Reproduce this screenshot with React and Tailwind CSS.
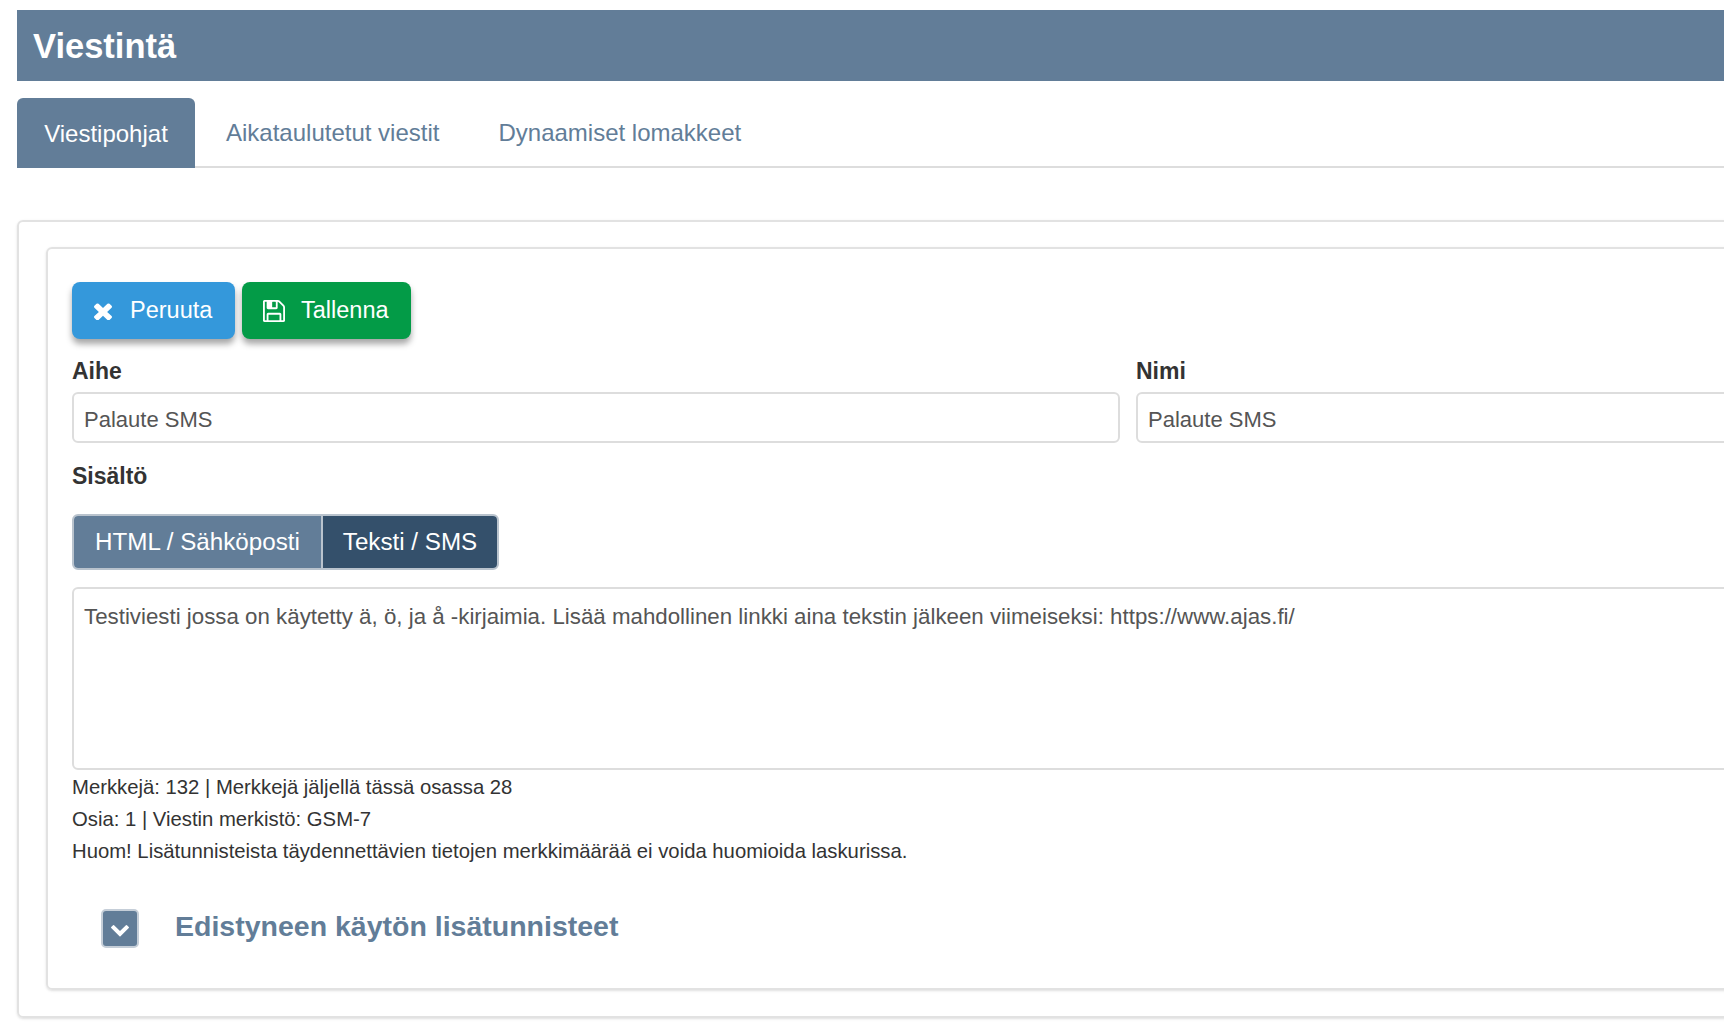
import React from "react";

const inputClasses =
  "block w-full h-[51px] border-2 border-[#dddddd] rounded-[6px] px-[10px] pt-[4px] text-[22px] text-[#555555] bg-white";

const TimesIcon = ({ className }) => (
  <svg className={className} viewBox="110 266 1188 1260" preserveAspectRatio="none" fill="currentColor">
    <path d="M1298 1322q0 40-28 68l-136 136q-28 28-68 28t-68-28l-294-294-294 294q-28 28-68 28t-68-28l-136-136q-28-28-28-68t28-68l294-294-294-294q-28-28-28-68t28-68l136-136q28-28 68-28t68 28l294 294 294-294q28-28 68-28t68 28l136 136q28 28 28 68t-28 68l-294 294 294 294q28 28 28 68z" />
  </svg>
);

const SaveIcon = ({ className }) => (
  <svg className={className} viewBox="128 128 1536 1536" fill="currentColor">
    <path d="M512 1536h768v-384h-768v384zm896 0h128v-896q0-14-10-38.500t-20-34.500l-281-281q-10-10-34-20t-39-10v416q0 40-28 68t-68 28h-576q-40 0-68-28t-28-68v-416h-128v1280h128v-416q0-40 28-68t68-28h832q40 0 68 28t28 68v416zm-384-928v-320q0-13-9.500-22.500t-22.500-9.500h-192q-13 0-22.500 9.500t-9.500 22.500v320q0 13 9.500 22.500t22.500 9.500h192q13 0 22.500-9.500t9.500-22.500zm640 32v928q0 40-28 68t-68 28h-1344q-40 0-68-28t-28-68v-1344q0-40 28-68t68-28h928q40 0 88 20t76 48l280 280q28 28 48 76t20 88z" />
  </svg>
);

const ChevronIcon = ({ className }) => (
  <svg className={className} viewBox="0 0 1792 1792" fill="currentColor">
    <path d="M1683 808l-742 741q-19 19-45 19t-45-19l-742-741q-19-19-19-45.500t19-45.500l166-165q19-19 45-19t45 19l531 531 531-531q19-19 45-19t45 19l166 165q19 19 19 45.500t-19 45.500z" />
  </svg>
);

const App = () => {
  return (
    <div className="w-[1724px] h-[1036px] overflow-hidden bg-white font-['Liberation_Sans',Arial,sans-serif] text-[#333333]">
      <div className="w-[2400px] pl-[17px] pt-[10px]">
        <div className="h-[71px] bg-[#627d98] flex items-center pl-[16px] pt-[3px]">
          <h1 className="text-[34.5px] font-bold text-white">Viestintä</h1>
        </div>

        <div className="mt-[17px] h-[70px] flex border-b-2 border-[#dddddd] text-[24px]">
          <div className="h-[70px] w-[178px] pt-[1px] flex items-center justify-center bg-[#627d98] text-white rounded-t-[6px]">
            Viestipohjat
          </div>
          <div className="pl-[31px] pr-[59px] pt-[2px] flex items-center text-[#627d98]">
            Aikataulutetut viestit
          </div>
          <div className="pt-[2px] flex items-center text-[#627d98]">
            Dynaamiset lomakkeet
          </div>
        </div>

        <div className="mt-[52px] h-[798px] border-2 border-[#e2e2e2] rounded-[6px] pl-[27px] pt-[25px] shadow-sm">
          <div className="h-[743px] border-2 border-[#e2e2e2] rounded-[6px] pl-[24px] pt-[33px] shadow-sm">
            <div className="flex gap-[7px] text-[23.5px] text-white">
              <button className="w-[163px] h-[57px] flex items-center pl-[22px] gap-[18px] rounded-[8px] bg-[#3498db] shadow-[0_5px_6px_rgba(0,0,0,0.35)]">
                <TimesIcon className="w-[18px] h-[18px]" />
                Peruuta
              </button>
              <button className="w-[169px] h-[57px] flex items-center pl-[21px] gap-[16px] rounded-[8px] bg-[#039b47] shadow-[0_5px_6px_rgba(0,0,0,0.35)]">
                <SaveIcon className="w-[22px] h-[22px]" />
                Tallenna
              </button>
            </div>

            <div className="w-[2112px] mt-[18px] grid grid-cols-2 gap-x-[16px]">
              <div>
                <label className="block h-[35px] text-[23px] font-bold leading-[29px]">Aihe</label>
                <input className={inputClasses} defaultValue="Palaute SMS" readOnly />
              </div>
              <div>
                <label className="block h-[35px] text-[23px] font-bold leading-[29px]">Nimi</label>
                <input className={inputClasses} defaultValue="Palaute SMS" readOnly />
              </div>
            </div>

            <div className="mt-[16px] h-[35px] text-[23px] font-bold leading-[35px]">Sisältö</div>

            <div className="mt-[20px] w-[427px] h-[56px] flex border-2 border-[#b9c3cd] rounded-[6px] overflow-hidden text-[24.2px] text-white">
              <div className="w-[249px] flex items-center justify-center bg-[#627d98] border-r-2 border-[#b9c3cd]">
                HTML / Sähköposti
              </div>
              <div className="flex-1 flex items-center justify-center bg-[#34506b]">Teksti / SMS</div>
            </div>

            <div className="mt-[17px] w-[2112px] h-[183px] border-2 border-[#dddddd] rounded-[6px] px-[10px] pt-[14px] text-[22.3px] leading-[28px] text-[#555555]">
              Testiviesti jossa on käytetty ä, ö, ja å -kirjaimia. Lisää mahdollinen linkki aina tekstin jälkeen viimeiseksi: https://www.ajas.fi/
            </div>

            <div className="mt-[1px] text-[20.3px] leading-[32px] text-[#333333]">
              <p>Merkkejä: 132 | Merkkejä jäljellä tässä osassa 28</p>
              <p>Osia: 1 | Viestin merkistö: GSM-7</p>
              <p>Huom! Lisätunnisteista täydennettävien tietojen merkkimäärää ei voida huomioida laskurissa.</p>
            </div>

            <div className="mt-[38px] ml-[29px] flex items-center">
              <button className="w-[38px] h-[39px] flex items-center justify-center bg-[#627d98] border-2 border-[#c5ced8] rounded-[5px] text-white">
                <ChevronIcon className="w-[20px] h-[20px] mt-[2px]" />
              </button>
              <h2 className="ml-[36px] pb-[4px] text-[28.5px] font-bold text-[#627d98]">Edistyneen käytön lisätunnisteet</h2>
            </div>
          </div>
        </div>
      </div>
    </div>
  );
};

export default App;
